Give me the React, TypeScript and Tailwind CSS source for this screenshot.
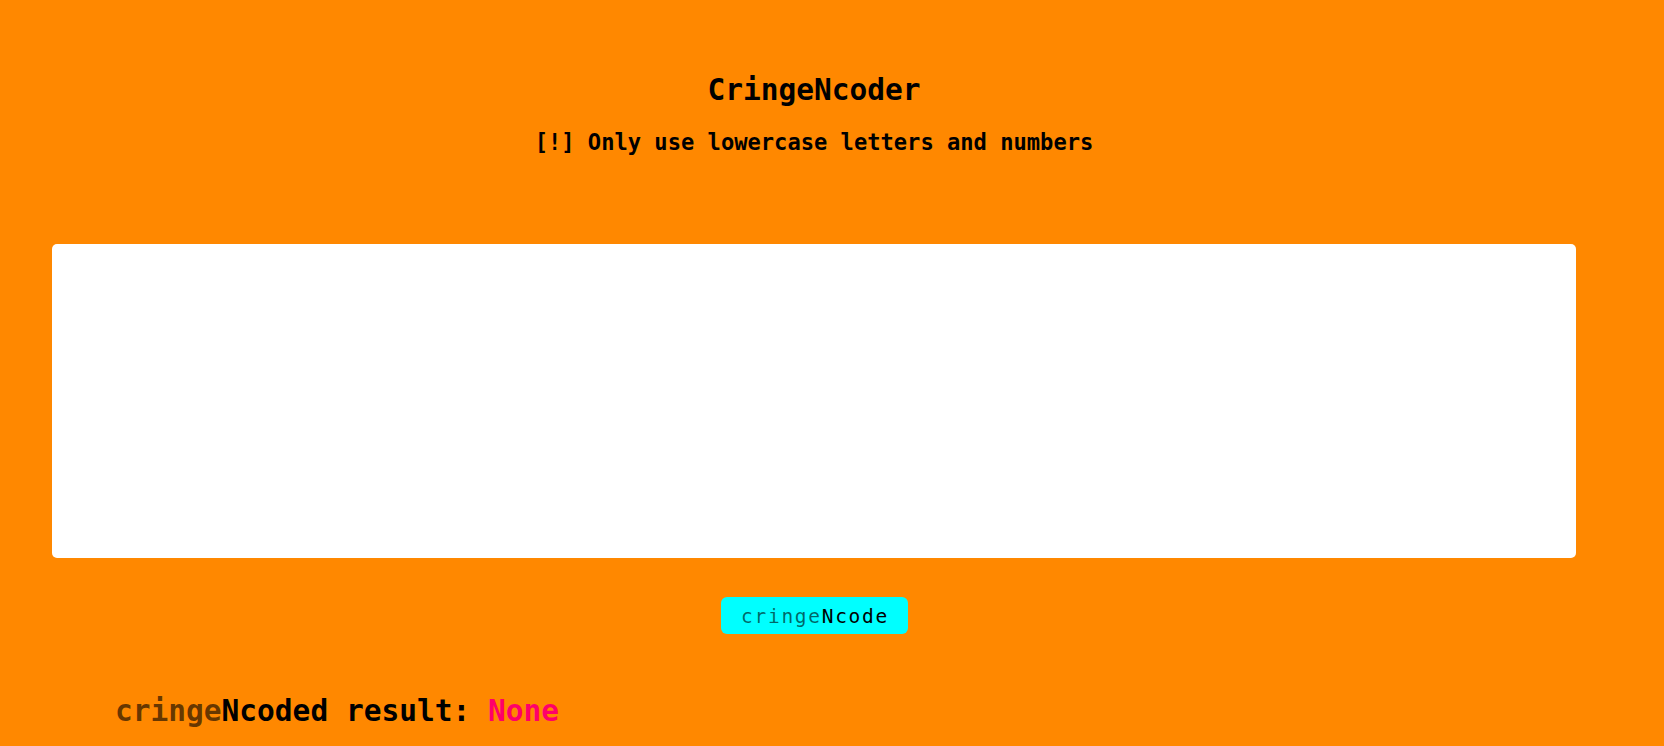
import React from "react";

export default function App() {
  const mono = "font-['DejaVu_Sans_Mono','Liberation_Mono',monospace]";
  return (
    <div className={`min-h-[746px] w-full bg-[#ff8800] text-black ${mono}`}>
      <div className="flex w-[1628px] flex-col items-center pt-[72px]">
        <h1 className="h-[36px] text-[29.5px] font-bold leading-[36px]">CringeNcoder</h1>
        <h2 className="mt-[20px] h-[28px] text-[22.1px] font-bold leading-[28px]">
          [!] Only use lowercase letters and numbers
        </h2>
        <textarea
          className="mt-[88px] h-[314px] w-[1524px] resize-none rounded-[5px] border-0 bg-white p-2 outline-none"
          aria-label="input"
        />
        <button className="mt-[39px] flex h-[37px] w-[187px] items-center justify-center rounded-[6px] bg-[#00ffff] pl-[2px] pt-[3px] text-[19.5px] leading-none tracking-[1.7px]">
          <span className="text-black/60">cringe</span>
          <span>Ncode</span>
        </button>
        <div className="mt-[59px] h-[36px] w-full pl-[115px] text-[29.5px] font-bold leading-[36px]">
          <span className="text-black/60">cringe</span>
          <span>Ncoded result: </span>
          <span className="text-[#ff006a]">None</span>
        </div>
      </div>
    </div>
  );
}
